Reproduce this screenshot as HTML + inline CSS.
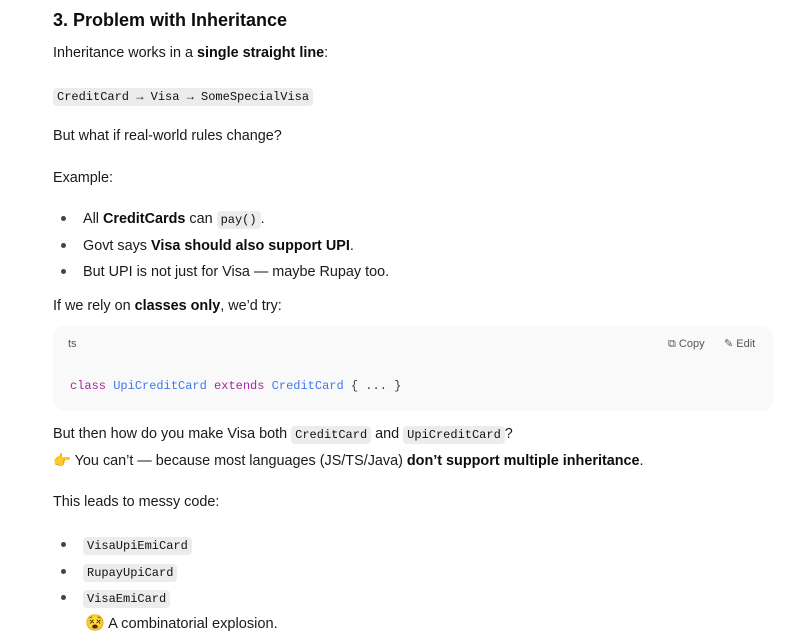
<!DOCTYPE html>
<html><head><meta charset="utf-8"><style>
*{margin:0;padding:0;box-sizing:border-box}
body{width:798px;height:643px;background:#fff;font-family:"Liberation Sans",sans-serif;color:#1a1a1a;font-size:14.4px;position:relative;overflow:hidden}
.l{position:absolute;left:53px;white-space:nowrap;line-height:20px}
b{font-weight:700;color:#0d0d0d}
code{font-family:"Liberation Mono",monospace;font-size:12px;background:#ececec;border-radius:4px;padding:2px 4px;color:#111}
.dot{position:absolute;left:61px;width:5px;height:5px;border-radius:50%;background:#444}
.cb{position:absolute;left:53px;top:326px;width:720px;height:85px;background:#f9f9f9;border-radius:12px}
.mono{font-family:"Liberation Mono",monospace;font-size:12px}
</style></head><body>
<div class="l" style="top:8px;font-size:18px;font-weight:700;color:#0d0d0d;line-height:24px">3. Problem with Inheritance</div>
<div class="l" style="top:43px">Inheritance works in a <b>single straight line</b>:</div>
<div class="l" style="top:86px"><code>CreditCard → Visa → SomeSpecialVisa</code></div>
<div class="l" style="top:126px">But what if real-world rules change?</div>
<div class="l" style="top:168px">Example:</div>
<div class="dot" style="top:216px"></div>
<div class="l" style="left:83px;top:209px">All <b>CreditCards</b> can <code>pay()</code>.</div>
<div class="dot" style="top:243px"></div>
<div class="l" style="left:83px;top:236px">Govt says <b>Visa should also support UPI</b>.</div>
<div class="dot" style="top:269px"></div>
<div class="l" style="left:83px;top:262px">But UPI is not just for Visa — maybe Rupay too.</div>
<div class="l" style="top:296px">If we rely on <b>classes only</b>, we’d try:</div>
<div class="cb"></div>
<div class="l" style="left:68px;top:337px;font-size:11px;color:#555;line-height:14px">ts</div>
<div class="l" style="left:668px;top:337px;font-size:11px;color:#555;line-height:14px">⧉ Copy</div>
<div class="l" style="left:724px;top:337px;font-size:11px;color:#555;line-height:14px">✎ Edit</div>
<div class="l mono" style="left:70px;top:376px"><span style="color:#a626a4">class</span> <span style="color:#4078f2">UpiCreditCard</span> <span style="color:#a626a4">extends</span> <span style="color:#4078f2">CreditCard</span> <span style="color:#383a42">{ ... }</span></div>
<div class="l" style="top:424px">But then how do you make Visa both <code>CreditCard</code> and <code>UpiCreditCard</code>?</div>
<div class="l" style="top:451px">👉 You can’t — because most languages (JS/TS/Java) <b>don’t support multiple inheritance</b>.</div>
<div class="l" style="top:492px">This leads to messy code:</div>
<div class="dot" style="top:542px"></div>
<div class="l" style="left:83px;top:535px"><code>VisaUpiEmiCard</code></div>
<div class="dot" style="top:569px"></div>
<div class="l" style="left:83px;top:562px"><code>RupayUpiCard</code></div>
<div class="dot" style="top:595px"></div>
<div class="l" style="left:83px;top:588px"><code>VisaEmiCard</code></div>
<div class="l" style="left:85px;top:614px;font-size:14.6px"><span style="font-size:16px">😵</span> A combinatorial explosion.</div>
</body></html>
